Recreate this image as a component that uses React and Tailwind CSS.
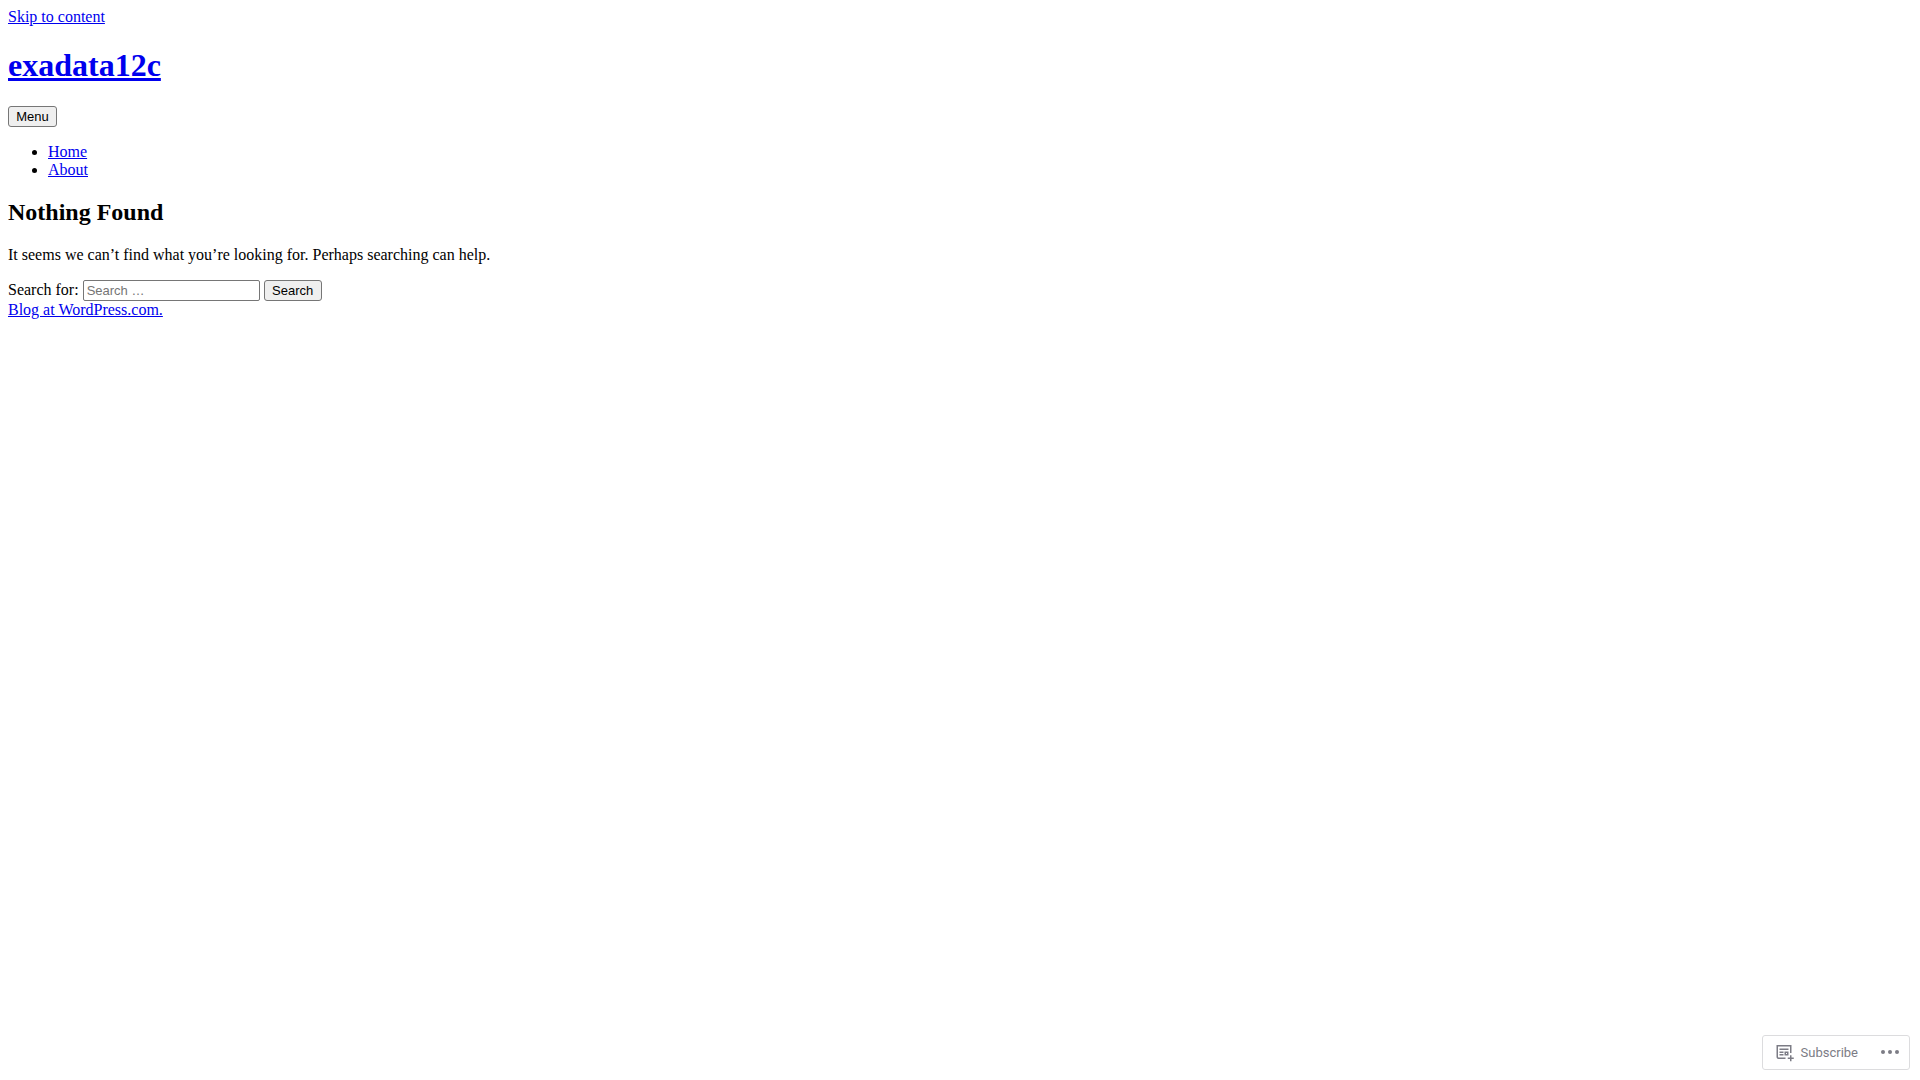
import React, { useState } from 'react';

const NAV_ITEMS = [
  { label: 'Home', href: '#home' },
  { label: 'About', href: '#about' },
];

const LINK = 'text-[#0000ee] underline';
const BUTTON =
  'h-[21px] px-1.5 rounded-[3px] border border-[#767676] bg-[#efefef] font-["Liberation_Sans",Arial,sans-serif] text-[13px] leading-[15px] text-black';

function SiteHeader() {
  return (
    <header>
      <h1 className="mt-[21px] text-[32px] leading-[37px] font-bold">
        <a href="#home" className={LINK}>exadata12c</a>
      </h1>
      <nav className="mt-[22px]">
        <button type="button" className={`${BUTTON} block min-w-[49px]`}>Menu</button>
        <ul className="my-4 pl-10 list-disc">
          {NAV_ITEMS.map(item => (
            <li key={item.label}>
              <a href={item.href} className={LINK}>{item.label}</a>
            </li>
          ))}
        </ul>
      </nav>
    </header>
  );
}

function SearchForm() {
  const [query, setQuery] = useState('');

  return (
    <form role="search" className="flex items-baseline gap-1" onSubmit={e => e.preventDefault()}>
      <label htmlFor="search-field">Search for:</label>
      <input
        id="search-field"
        type="search"
        placeholder="Search …"
        value={query}
        onChange={e => setQuery(e.target.value)}
        className='w-[177px] h-[21px] px-[3px] rounded-[2px] border border-[#767676] bg-white font-["Liberation_Sans",Arial,sans-serif] text-[13px] leading-[15px] placeholder:text-[#757575]'
      />
      <button type="submit" className={`${BUTTON} min-w-[58px]`}>Search</button>
    </form>
  );
}

function ActionBar() {
  return (
    <div className="fixed right-2.5 bottom-2.5 h-[35px] pl-[11px] pr-[7px] flex items-center gap-5 rounded-[3px] border border-[#dcdcde] bg-white text-[#7c7c85]">
      <button type="button" className="flex items-start gap-[7px] font-[Roboto,sans-serif] text-[13px] leading-[21px]">
        <svg className="w-5 h-5" viewBox="0 0 20 20" fill="currentColor" aria-hidden="true">
          <path
            fillRule="evenodd"
            clipRule="evenodd"
            d="m4 4.5h12v6.5h1.5v-6.5-1.5h-1.5-12-1.5v1.5 10.5c0 1.1046.89543 2 2 2h7v-1.5h-7c-.27614 0-.5-.2239-.5-.5zm10.5 2h-9v1.5h9zm-5 3h-4v1.5h4zm3.5 1.5h-1v1h1zm-1-1.5h-1.5v1.5 1 1.5h1.5 1 1.5v-1.5-1-1.5h-1.5zm-2.5 2.5h-4v1.5h4zm6.5 1.25h1.5v2.25h2.25v1.5h-2.25v2.25h-1.5v-2.25h-2.25v-1.5h2.25z"
          />
        </svg>
        Subscribe
      </button>
      <button type="button" aria-label="More options" className="flex items-start h-[25px]">
        <svg className="w-6 h-6" viewBox="0 0 24 24" fill="currentColor" aria-hidden="true">
          <circle cx="5" cy="12" r="2" />
          <circle cx="12" cy="12" r="2" />
          <circle cx="19" cy="12" r="2" />
        </svg>
      </button>
    </div>
  );
}

export default function App() {
  return (
    <div className='p-2 bg-white text-black font-["Liberation_Serif","Times_New_Roman",serif] text-base leading-[18px]'>
      <a href="#content" className={`${LINK} block w-fit`}>Skip to content</a>
      <SiteHeader />
      <main id="content">
        <h2 className="mt-5 mb-5 text-2xl leading-[27px] font-bold">Nothing Found</h2>
        <p className="mb-4">It seems we can’t find what you’re looking for. Perhaps searching can help.</p>
        <SearchForm />
      </main>
      <footer>
        <a href="#wordpress" className={`${LINK} block w-fit`}>Blog at WordPress.com.</a>
      </footer>
      <ActionBar />
    </div>
  );
}
